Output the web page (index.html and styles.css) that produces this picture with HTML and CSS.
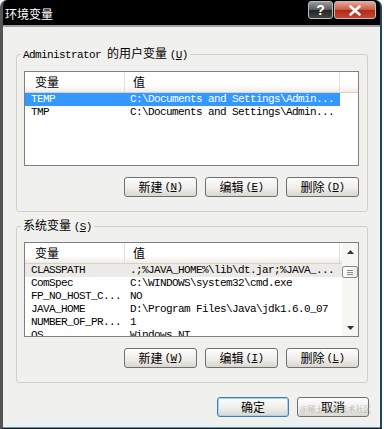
FILE: index.html
```html
<!DOCTYPE html>
<html lang="zh-CN">
<head>
  <meta charset="UTF-8">
  <title>环境变量</title>
  <link rel="stylesheet" href="styles.css">
</head>
<body>
  <div class="win">
    <div class="titlebar">
      <span class="title">环境变量</span>
      <span class="tbtn help">?</span>
      <span class="tbtn close">
        <svg width="14" height="11" viewBox="0 0 14 11"><path d="M2.5 1.5 L11.5 9.5 M11.5 1.5 L2.5 9.5" stroke="#fff" stroke-width="2.6" stroke-linecap="round"/></svg>
      </span>
    </div>

    <div class="client">
      <fieldset class="group">
        <legend><span class="a">Administrator </span>的用户变量 <span class="a">(<u>U</u>)</span></legend>
        <div class="list">
          <div class="cols">
            <div class="head"><span class="c1">变量</span><span class="c2">值</span><span class="c3"></span></div>
            <div class="row sel"><span class="c1">TEMP</span><span class="c2">C:\Documents and Settings\Admin...</span></div>
            <div class="row"><span class="c1">TMP</span><span class="c2">C:\Documents and Settings\Admin...</span></div>
          </div>
        </div>
        <div class="btns">
          <span class="btn">新建 <span class="a">(<u>N</u>)</span></span>
          <span class="btn">编辑 <span class="a">(<u>E</u>)</span></span>
          <span class="btn">删除 <span class="a">(<u>D</u>)</span></span>
        </div>
      </fieldset>

      <fieldset class="group sys">
        <legend>系统变量 <span class="a">(<u>S</u>)</span></legend>
        <div class="list">
          <div class="cols">
            <div class="head"><span class="c1">变量</span><span class="c2">值</span><span class="c3"></span></div>
            <div class="row dim"><span class="c1">CLASSPATH</span><span class="c2">.;%JAVA_HOME%\lib\dt.jar;%JAVA_...</span></div>
            <div class="row"><span class="c1">ComSpec</span><span class="c2">C:\WINDOWS\system32\cmd.exe</span></div>
            <div class="row"><span class="c1">FP_NO_HOST_C...</span><span class="c2">NO</span></div>
            <div class="row"><span class="c1">JAVA_HOME</span><span class="c2">D:\Program Files\Java\jdk1.6.0_07</span></div>
            <div class="row"><span class="c1">NUMBER_OF_PR...</span><span class="c2">1</span></div>
            <div class="row"><span class="c1">OS</span><span class="c2">Windows_NT</span></div>
          </div>
          <div class="sbar">
            <div class="sbtn"><svg width="7" height="4" viewBox="0 0 7 4"><path d="M0 4 L3.5 0 L7 4 Z" fill="#333"/></svg></div>
            <div class="track"><div class="thumb"><i></i><i></i><i></i></div></div>
            <div class="sbtn"><svg width="7" height="4" viewBox="0 0 7 4"><path d="M0 0 L3.5 4 L7 0 Z" fill="#333"/></svg></div>
          </div>
        </div>
        <div class="btns">
          <span class="btn">新建 <span class="a">(<u>W</u>)</span></span>
          <span class="btn">编辑 <span class="a">(<u>I</u>)</span></span>
          <span class="btn">删除 <span class="a">(<u>L</u>)</span></span>
        </div>
      </fieldset>

      <div class="foot">
        <span class="btn def">确定</span>
        <span class="btn">取消</span>
      </div>
    </div>

    <span class="mark">@稀土掘金技术社区</span>
  </div>
</body>
</html>
```

FILE: styles.css
```css
html,body{margin:0;padding:0;background:#fff;}
body{font-family:"Noto Sans CJK SC","Liberation Sans",sans-serif;font-size:12px;color:#000;}
/* 半角字符：宋体点阵宽 6px */
.a,.list{font-family:"Liberation Mono","Noto Sans CJK SC",monospace;font-size:11px;letter-spacing:-0.6px;}

.win{position:relative;width:382px;height:429px;box-sizing:border-box;
  display:flex;flex-direction:column;
  border-left:3px solid #555;border-right:2px solid #23425e;border-bottom:1px solid #1b1b1b;
  border-radius:7px 7px 0 0;background:#000;overflow:hidden;}

.titlebar{height:25px;flex:none;display:flex;align-items:flex-start;border-bottom:2px solid #a0a0a0;}
.title{flex:1;color:#fff;font-size:12px;line-height:14px;margin:7px 0 0 2px;}
.tbtn{height:18px;margin-top:1px;box-sizing:border-box;border:1px solid #bdbdbd;border-radius:3px;
  display:flex;align-items:center;justify-content:center;
  color:#fff;font:bold 14px/1 "Liberation Sans",sans-serif;}
.help{width:25px;background:linear-gradient(#9a9a9a,#5a5a5a 48%,#262626 52%,#444);}
.close{width:42px;margin:1px 4px 0 1px;background:linear-gradient(#e6a596,#cc5a44 48%,#b02a18 52%,#c9452c);}

.client{flex:1;background:#f0f0ee;border-bottom:1px solid #4b9bd0;padding:0 11px 0 13px;}

.group{margin:20px 0 0;width:352px;box-sizing:border-box;min-inline-size:0;
  border:1px solid #d0d0c6;border-radius:3px;padding:10px 8px 14px 7px;}
.group.sys{margin-top:7px;padding-top:9px;}
.group legend{padding:0 2px;margin-left:-3px;font-size:12px;line-height:12px;}

.list{height:95px;box-sizing:border-box;border:1px solid #7f7f7f;background:#fff;display:flex;overflow:hidden;}
.cols{flex:1;min-width:0;}
.head{display:flex;height:21px;box-sizing:border-box;border-bottom:1px solid #d5d2ca;
  background:linear-gradient(#fff 65%,#efede6);
  font-family:"Noto Sans CJK SC",sans-serif;font-size:12px;letter-spacing:0;line-height:20px;}
.head span{box-sizing:border-box;border-right:1px solid #e2dfd6;}
.head .c1{width:100px;padding-left:10px;}
.head .c2{width:215px;padding-left:8px;}
.head .c3{flex:1;border-right:0;}
.row{display:flex;height:13px;line-height:13px;white-space:nowrap;}
.row span{box-sizing:border-box;}
.row .c1{width:100px;padding-left:6px;}
.row .c2{width:215px;padding-left:5px;}
.row.sel{width:315px;background:#3399ff;color:#fff;}
.row.dim{background:#ebeae6;}

.sbar{width:16px;flex:none;display:flex;flex-direction:column;background:#f6f6f3;}
.sbtn{height:17px;display:flex;align-items:center;justify-content:center;}
.track{flex:1;}
.thumb{margin-top:6px;height:12px;box-sizing:border-box;border:1px solid #8a8a8a;border-radius:2px;
  background:linear-gradient(90deg,#fff,#ecebe6);
  display:flex;flex-direction:column;align-items:center;justify-content:center;gap:1px;}
.thumb i{display:block;width:6px;height:1px;background:#8a8a8a;}

.btns{display:flex;justify-content:flex-end;gap:8px;margin-top:11px;}
.btn{width:73px;height:20px;box-sizing:border-box;border:1px solid #707070;border-radius:3px;
  background:linear-gradient(#fdfdfd,#efeeea 55%,#d9d7cf);
  display:flex;align-items:center;justify-content:center;font-size:12px;line-height:12px;}
.btn .a{margin-left:2px;}
.foot{display:flex;justify-content:flex-end;gap:8px;margin-top:14px;}
.foot .btn{width:72px;}
.btn.def{border-color:#3c7fb1;box-shadow:inset 0 0 0 1px #a6d2f2;}

.mark{position:absolute;left:297px;top:404px;white-space:nowrap;font-size:8px;line-height:10px;color:rgba(150,150,150,.55);}
```
